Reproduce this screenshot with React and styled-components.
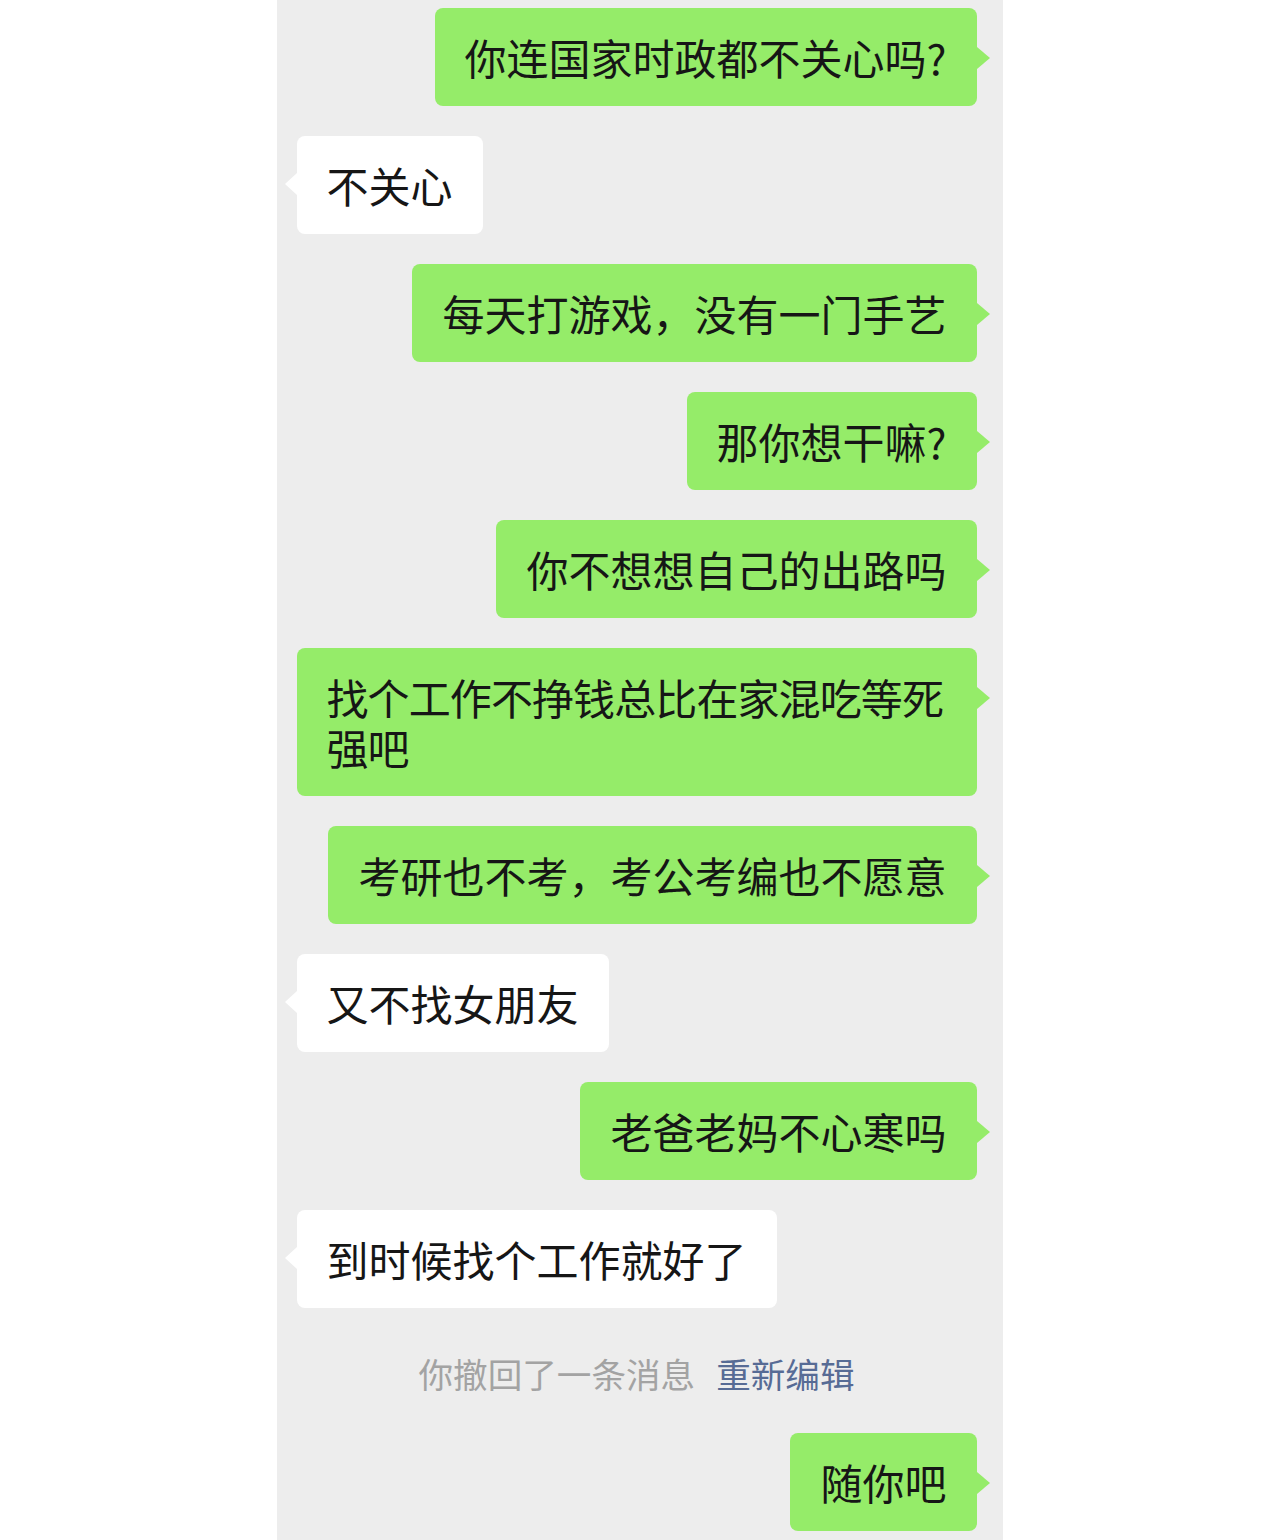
import React from "react";
import styled, { createGlobalStyle, css } from "styled-components";

const GlobalStyle = createGlobalStyle`
  html, body {
    margin: 0;
    padding: 0;
    background: #ffffff;
  }
  body {
    font-family: "Noto Sans CJK SC", "Noto Sans", sans-serif;
  }
`;

const Page = styled.div`
  display: flex;
  justify-content: center;
  background: #ffffff;
  min-height: 1540px;
`;

const Chat = styled.div`
  width: 726px;
  min-height: 1540px;
  box-sizing: border-box;
  background: #ededed;
  padding: 8px 26px 0 20px;
  display: flex;
  flex-direction: column;
  gap: 30px;
`;

const Row = styled.div`
  display: flex;
  justify-content: ${(p) => (p.$mine ? "flex-end" : "flex-start")};
`;

const Bubble = styled.div`
  position: relative;
  box-sizing: border-box;
  max-width: 680px;
  padding: 24px 30px;
  border-radius: 8px;
  font-size: 42px;
  line-height: 50px;
  color: #161616;
  letter-spacing: ${(p) => (p.$tight ? "-0.9px" : "0")};
  word-break: break-all;
  background: ${(p) => (p.$mine ? "#95ec69" : "#ffffff")};

  &::before {
    content: "";
    position: absolute;
    width: 0;
    height: 0;
    border-top: 11px solid transparent;
    border-bottom: 11px solid transparent;
    ${(p) =>
      p.$mine
        ? css`
            right: -13px;
            top: 39px;
            border-left: 13px solid #95ec69;
          `
        : css`
            left: -12px;
            top: 37px;
            border-right: 12px solid #ffffff;
          `}
  }
`;

const System = styled.div`
  height: 65px;
  box-sizing: border-box;
  padding-top: 4px;
  display: flex;
  align-items: center;
  justify-content: center;
  font-size: 34.6px;
  color: #a3a3a3;
`;

const ReEdit = styled.span`
  margin-left: 21px;
  color: #576b95;
`;

const messages = [
  { mine: true, text: "你连国家时政都不关心吗?" },
  { mine: false, text: "不关心" },
  { mine: true, text: "每天打游戏，没有一门手艺" },
  { mine: true, text: "那你想干嘛?" },
  { mine: true, text: "你不想想自己的出路吗" },
  { mine: true, text: "找个工作不挣钱总比在家混吃等死强吧", tight: true },
  { mine: true, text: "考研也不考，考公考编也不愿意" },
  { mine: false, text: "又不找女朋友" },
  { mine: true, text: "老爸老妈不心寒吗" },
  { mine: false, text: "到时候找个工作就好了" },
];

export default function App() {
  return (
    <>
      <GlobalStyle />
      <Page>
        <Chat>
          {messages.map((m, i) => (
            <Row key={i} $mine={m.mine}>
              <Bubble $mine={m.mine} $tight={m.tight}>
                {m.text}
              </Bubble>
            </Row>
          ))}
          <System>
            你撤回了一条消息<ReEdit>重新编辑</ReEdit>
          </System>
          <Row $mine>
            <Bubble $mine>随你吧</Bubble>
          </Row>
        </Chat>
      </Page>
    </>
  );
}
